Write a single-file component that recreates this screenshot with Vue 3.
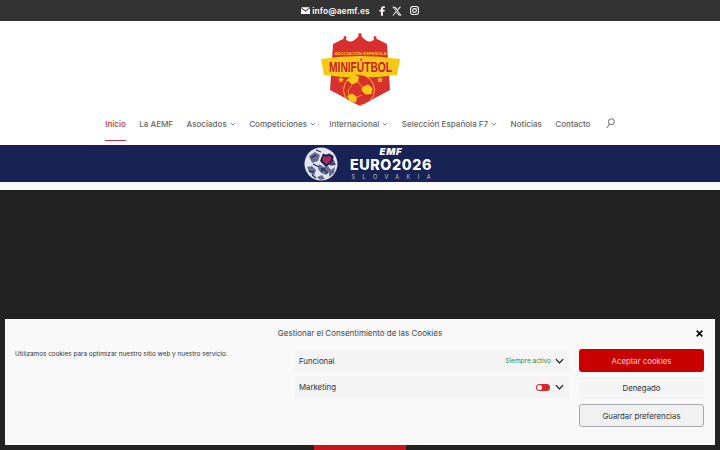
<script setup>
const menu = [
  { label: 'Inicio', active: true },
  { label: 'La AEMF' },
  { label: 'Asociados', caret: true },
  { label: 'Competiciones', caret: true },
  { label: 'Internacional', caret: true },
  { label: 'Selección Española F7', caret: true },
  { label: 'Noticias' },
  { label: 'Contacto' }
];
</script>

<template>
  <div class="page">
    <!-- Top bar -->
    <div class="topbar">
      <svg class="mail" viewBox="0 0 12 9" width="9" height="7"><path d="M0 0h12L6 4.600zM0 1.600v7.400h12V1.600L6 6.200z" fill="#fff"/></svg>
      <span class="mail-text">info@aemf.es</span>
      <svg class="social fb" viewBox="0 0 10 16" width="6" height="10"><path d="M6.500 16V9h2.600l.5-3H6.500V4.300c0-.9.3-1.500 1.600-1.500h1.600V.2C9.400.1 8.500 0 7.400 0 5 0 3.400 1.400 3.400 4v2H.7v3h2.700v7z" fill="#fff"/></svg>
      <svg class="social x" viewBox="0 0 24 24" width="10" height="10"><path d="M18.200 1.500h3.700l-8 9.200L23.300 22.500h-7.400l-5.800-7.600-6.600 7.600H.8l8.600-9.800L.4 1.500H8l5.200 6.900zm-1.300 18.900h2L5.800 3.500H3.600z" fill="#fff"/></svg>
      <svg class="social ig" viewBox="0 0 24 24" width="9" height="9" fill="none" stroke="#fff" stroke-width="2.800"><rect x="1.500" y="1.500" width="21" height="21" rx="6"/><circle cx="12" cy="12" r="5"/><circle cx="18.200" cy="5.800" r="1.200" fill="#fff" stroke="none"/></svg>
    </div>

    <!-- Header -->
    <header class="header">
      <svg class="logo" viewBox="0 0 79 74" width="79" height="74">
        <defs>
          <clipPath id="shield"><path d="M12 11 L24 5 Q27 10 32 8 Q36 6 39 1 Q42 6 46 8 Q51 10 54 5 L66 11 L69 57 L39 73 L9 57 Z"/></clipPath>
        </defs>
        <circle cx="39" cy="1.500" r="1.500" fill="#d8302f"/>
        <circle cx="24" cy="4.500" r="1.500" fill="#d8302f"/>
        <circle cx="54" cy="4.500" r="1.500" fill="#d8302f"/>
        <path d="M12 11 L24 5 Q27 10 32 8 Q36 6 39 1 Q42 6 46 8 Q51 10 54 5 L66 11 L69 57 L39 73 L9 57 Z" fill="#d8302f"/>
        <path d="M0 26 Q39 20 79 26 L76 42 Q39 47 3 42 Z" fill="#f7c915"/>
        <text x="39.500" y="22" text-anchor="middle" class="logo-small">ASOCIACIÓN ESPAÑOLA</text>
        <text transform="translate(39.500 39) scale(1 1.400)" text-anchor="middle" class="logo-big">MINIFÚTBOL</text>
        <path d="M20 43.500l.9 2.200 2.300.1-1.800 1.500.6 2.300-2-1.300-2 1.300.6-2.300-1.800-1.500 2.300-.1zM59 43.500l.9 2.200 2.300.1-1.800 1.500.6 2.300-2-1.300-2 1.300.6-2.300-1.800-1.500 2.300-.1z" fill="#f7c915"/>
        <g clip-path="url(#shield)">
          <circle cx="38" cy="57" r="15.500" fill="#d8302f" stroke="#f7c915" stroke-width=".9"/>
          <path d="M26 47l6-5 6 1.500-1 5.500-6 2.500zM41 54l6-2.500 4.500 3.500-1 6-6 .5-4-4zM26 63l5-2.500 5 3.500-1 5.500-6-1z" fill="#f7c915"/>
          <path d="M31 52l-4 5 1 5M37 49l4 5M36 64l5-2" stroke="#f7c915" stroke-width=".7" fill="none"/>
        </g>
      </svg>
      <nav class="nav">
        <a v-for="item in menu" :key="item.label" :class="['nav-item', { active: item.active }]">
          {{ item.label }}
          <svg v-if="item.caret" class="caret" viewBox="0 0 8 5" width="6" height="4"><path d="M1 1l3 3 3-3" fill="none" stroke="#666" stroke-width="1.100"/></svg>
        </a>
        <svg class="search" viewBox="0 0 10 12" width="9" height="11" fill="none" stroke="#555" stroke-width="1"><circle cx="6" cy="4" r="3.300"/><path d="M3.800 6.600L1 11"/></svg>
      </nav>
    </header>

    <!-- Banner -->
    <div class="banner">
      <svg class="emblem" viewBox="0 0 34 34" width="34" height="34">
        <circle cx="17" cy="17" r="16.500" fill="#e4e5ec"/>
        <path d="M5 9l6-4 5 3-2 6-6 2zM3 20l5-1 4 4-2 6-5-4zM15 17l5 3 4-1 3 4-5 5-5-2-3-4zM13 30l5-2 3 4-5 1zM25 24l6-4-1 6-5 4zM24 14l6-1 2 5-6 1z" fill="#666d92"/>
        <path d="M7 11l5-3M5 24l5 1M17 21l7 5M9 17l6 3M12 3l5 2M17 24l4-3M27 17l4 0M8 28l4 3" stroke="#1b2255" stroke-width="1.100" fill="none"/>
        <path d="M19 6.500l3 1.300 3-1.300 4.500 2.500-.5 5.500-7 5.500-6-6z" fill="#141b4c"/>
        <path d="M19.500 8.500l2.800 1.300 2.800-1.300 2.500 1.800-.6 3.500-4.700 3.800-4-4.300z" fill="#a82a5e"/>
      </svg>
      <div class="euro">
        <span class="emf">EMF</span>
        <span class="euro-title">EURO2026</span>
        <span class="slovakia">SLOVAKIA</span>
      </div>
    </div>
    <div class="gap"></div>

    <!-- Dark hero behind the cookie box -->
    <section class="hero">
      <div class="hero-button"></div>
    </section>

    <!-- Cookie box -->
    <div class="cookie">
      <svg class="close" viewBox="0 0 10 10" width="7" height="7"><path d="M1 1l8 8M9 1l-8 8" stroke="#111" stroke-width="2.600"/></svg>
      <div class="cookie-title">Gestionar el Consentimiento de las Cookies</div>
      <div class="cookie-body">
        <p class="cookie-msg">Utilizamos cookies para optimizar nuestro sitio web y nuestro servicio.</p>
        <div class="cats">
          <div class="cat">
            <span>Funcional</span>
            <span class="cat-right">
              <span class="always">Siempre activo</span>
              <svg class="chev" viewBox="0 0 10 6" width="9" height="6"><path d="M1 1l4 4 4-4" fill="none" stroke="#111" stroke-width="1.300"/></svg>
            </span>
          </div>
          <div class="cat">
            <span>Marketing</span>
            <span class="cat-right">
              <span class="toggle"><i></i></span>
              <svg class="chev" viewBox="0 0 10 6" width="9" height="6"><path d="M1 1l4 4 4-4" fill="none" stroke="#111" stroke-width="1.300"/></svg>
            </span>
          </div>
        </div>
        <div class="btns">
          <button class="btn accept">Aceptar cookies</button>
          <button class="btn deny">Denegado</button>
          <button class="btn save">Guardar preferencias</button>
        </div>
      </div>
    </div>
  </div>
</template>

<style>
html, body { margin: 0; height: 100%; overflow: hidden; background: #fff; }
</style>

<style scoped>
.page {
  width: 720px;
  height: 450px;
  display: flex;
  flex-direction: column;
  overflow: hidden;
  font-family: Inter, "Open Sans", sans-serif;
  position: relative;
}

/* === TOP BAR === */
.topbar {
  height: 21px;
  flex: none;
  background: #333;
  display: flex;
  align-items: center;
  justify-content: center;
  color: #fff;
}
.mail { margin-right: 2px; }
.mail-text { font-size: 8.400px; font-weight: 600; letter-spacing: 0.1px; }
.social { margin-left: 7px; }
.fb { margin-left: 9px; }
.ig { margin-left: 8px; }

/* === HEADER === */
.header {
  height: 124px;
  flex: none;
  background: #fff;
  display: flex;
  flex-direction: column;
  align-items: center;
  padding-top: 12px;
  box-sizing: border-box;
}
.logo { display: block; flex: none; }
.logo-small { font: 700 4.300px "Liberation Sans", sans-serif; fill: #f7c915; }
.logo-big { font: 700 10.200px "Liberation Sans", sans-serif; fill: #c8202c; }
.nav {
  margin-top: 6px;
  display: flex;
  align-items: flex-start;
  gap: 13.400px;
}
.nav-item {
  height: 28px;
  box-sizing: border-box;
  padding-top: 6px;
  font-size: 8.050px;
  font-weight: 500;
  color: #666;
  display: flex;
  gap: 3px;
  white-space: nowrap;
}
.caret { margin-top: 3px; }
.nav-item.active { color: #b5303c; border-bottom: 1.500px solid #c0303c; }
.search { margin: 5px 0 0 2px; }

/* === BANNER === */
.banner {
  height: 37px;
  flex: none;
  background: #182254;
  display: flex;
  align-items: center;
  justify-content: center;
  gap: 12px;
  padding-left: 16px;
}
.euro { width: 82px; padding-top: 1px; display: flex; flex-direction: column; align-items: center; color: #fff; line-height: 1; }
.emf { font-size: 9.500px; line-height: 9px; letter-spacing: 0.8px; font-weight: 900; font-style: italic; }
.euro-title { font-size: 14.300px; line-height: 14px; font-weight: 800; letter-spacing: 0.6px; margin-top: 2px; }
.slovakia { font-size: 5.500px; letter-spacing: 7.500px; margin-top: 3px; margin-right: -7.500px; color: #c5c8d8; white-space: nowrap; }
.gap { height: 8px; flex: none; background: #fafafa; }

/* === HERO === */
.hero {
  flex: 1;
  background: #222;
  display: flex;
  justify-content: center;
  align-items: flex-end;
}
.hero-button { width: 92px; height: 5px; background: #c4161c; }

/* === COOKIE === */
.cookie {
  position: absolute;
  left: 5px;
  top: 319px;
  width: 710px;
  height: 126px;
  background: #f9f9f9;
  box-sizing: border-box;
  padding: 9px 10px 0;
  color: #333;
}
.close { position: absolute; right: 12px; top: 11px; }
.cookie-title { text-align: center; font-size: 8px; font-weight: 400; line-height: 11px; color: #444; }
.cookie-body {
  display: grid;
  grid-template-columns: 270px 274px 125px;
  column-gap: 10px;
  margin-top: 10px;
}
.cookie-msg { margin: 0; font-size: 6.400px; line-height: 10px; color: #333; }
.cats { display: flex; flex-direction: column; gap: 4px; margin-top: 1px; }
.cat {
  height: 22px;
  background: #f4f4f4;
  display: flex;
  align-items: center;
  justify-content: space-between;
  padding: 0 5px 0 4px;
  font-size: 7.800px;
  color: #333;
  font-weight: 400;
}
.cat-right { display: flex; align-items: center; gap: 5px; }
.always { color: #2f8a2f; font-size: 6.500px; font-weight: 400; margin-right: -1px; }
.toggle {
  width: 14px;
  height: 7px;
  border-radius: 4px;
  background: #d7282f;
  display: flex;
  align-items: center;
  padding-left: 1px;
  box-sizing: border-box;
}
.toggle i { width: 5px; height: 5px; background: #fff; border-radius: 50%; }
.btns { display: flex; flex-direction: column; gap: 5px; }
.btn {
  height: 23px;
  border-radius: 3px;
  border: 0;
  padding: 0;
  font-family: inherit;
  font-size: 7.800px;
  font-weight: 400;
}
.accept { background: #c80000; color: #f5d8d8; }
.deny { background: #f4f4f4; color: #333; height: 22px; border-radius: 0; }
.save { background: #f1f1f1; color: #333; border: 1px solid #a4a9ad; }
</style>
